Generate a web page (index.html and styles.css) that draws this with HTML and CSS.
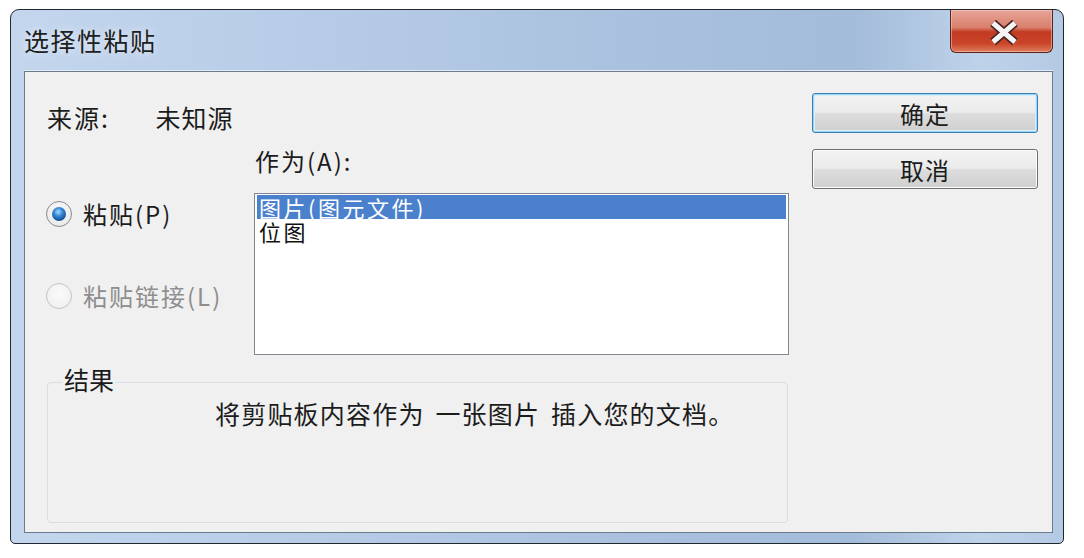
FILE: index.html
```html
<!DOCTYPE html>
<html lang="zh-CN">
<head>
    <meta charset="UTF-8">
    <title>选择性粘贴</title>
    <link rel="stylesheet" href="styles.css">
</head>
<body>
    <div class="window">
        <div class="titlebar">
            <span class="title">选择性粘贴</span>
            <button class="close" title="关闭">
                <svg width="103" height="43" viewBox="0 0 103 43">
                    <path d="M42 13 L64 32 M64 13 L42 32" stroke="#4b2420" stroke-width="8.5" fill="none"/>
                    <path d="M42 13 L64 32 M64 13 L42 32" stroke="#f4f4f4" stroke-width="5" fill="none"/>
                </svg>
            </button>
        </div>
        <div class="client">
            <div class="main">
                <div class="source">
                    <span class="source-label">来源:</span>
                    <span class="source-value">未知源</span>
                </div>
                <div class="as-label">作为(A):</div>
                <div class="choice">
                    <div class="radios">
                        <label class="radio checked"><span class="dot"></span>粘贴(P)</label>
                        <label class="radio disabled"><span class="dot"></span>粘贴链接(L)</label>
                    </div>
                    <ul class="list">
                        <li class="selected">图片(图元文件)</li>
                        <li>位图</li>
                    </ul>
                </div>
                <fieldset class="result">
                    <legend>结果</legend>
                    <p>将剪贴板内容作为 一张图片 插入您的文档。</p>
                </fieldset>
            </div>
            <div class="buttons">
                <button class="btn default">确定</button>
                <button class="btn">取消</button>
            </div>
        </div>
    </div>
</body>
</html>
```

FILE: styles.css
```css
body {
    margin: 0;
    padding: 0;
    background: #fff;
    font-family: "Noto Sans CJK SC", sans-serif;
    color: #1c1c1c;
}
.window {
    box-sizing: border-box;
    width: 1054px;
    height: 535px;
    margin: 9px 0 0 10px;
    padding: 0 10px 10px 13px;
    border: 1px solid #23282e;
    border-radius: 9px 9px 5px 5px;
    background: linear-gradient(90deg, #c3d6ee 0%, #b6cbe6 30%, #a9c1de 60%, #a3bcd9 80%, #bed2ea 92%, #b4cae4 100%);
    display: flex;
    flex-direction: column;
}
.titlebar {
    height: 61px;
    display: flex;
    justify-content: space-between;
    align-items: center;
}
.title {
    font-size: 25px;
    letter-spacing: 1.5px;
    padding-bottom: 2px;
    color: #202020;
    text-shadow: 0 0 8px rgba(255, 255, 255, 0.8);
}
.close {
    align-self: flex-start;
    width: 103px;
    height: 43px;
    padding: 0;
    border: 1px solid #5a241d;
    border-top: none;
    border-radius: 0 0 6px 6px;
    background: linear-gradient(#e6a598 0%, #d97f6c 42%, #c23a22 52%, #cb4529 80%, #de7e5e 100%);
    box-shadow: inset 0 0 0 1px rgba(255, 220, 210, 0.45);
}
.close svg {
    display: block;
}
.client {
    flex: 1;
    display: flex;
    padding: 0 13px 0 22px;
    border: 1px solid #6c7b8c;
    box-shadow: 0 -1px 0 #e4edf7;
    background: #f0f0f0;
}
.main {
    width: 742px;
}
.source {
    margin-top: 30px;
    font-size: 25px;
    line-height: 30px;
}
.source-label {
    display: inline-block;
    width: 103px;
    letter-spacing: 2px;
}
.source-value {
    letter-spacing: 1px;
}
.as-label {
    margin: 14px 0 0 208px;
    font-size: 24px;
    line-height: 30px;
    letter-spacing: 2px;
}
.choice {
    display: flex;
    margin-top: 17px;
}
.radios {
    width: 207px;
    padding-top: 6px;
    display: flex;
    flex-direction: column;
    gap: 52px;
}
.radio {
    display: flex;
    align-items: center;
    gap: 11px;
    font-size: 24px;
    line-height: 30px;
    letter-spacing: 2px;
    margin-left: -1px;
}
.radio .dot {
    box-sizing: border-box;
    width: 26px;
    height: 26px;
    border-radius: 50%;
    border: 1px solid #8a8c8e;
    background: radial-gradient(circle at 50% 40%, #ffffff, #e2e2e2);
    display: flex;
    align-items: center;
    justify-content: center;
}
.radio.checked .dot::after {
    content: "";
    width: 14px;
    height: 14px;
    border-radius: 50%;
    background: radial-gradient(circle at 45% 35%, #a8dcff 0%, #3a8ad6 35%, #0f4b93 75%, #0a2f66 100%);
}
.radio.disabled {
    color: #8e8e8e;
}
.radio.disabled .dot {
    border-color: #c3c3c3;
    background: radial-gradient(circle at 50% 40%, #fbfbfb, #ececec);
}
.list {
    box-sizing: border-box;
    width: 535px;
    height: 162px;
    margin: 0;
    padding: 1px 2px;
    list-style: none;
    border: 1px solid #828790;
    background: #fff;
    font-size: 22px;
    line-height: 24px;
    letter-spacing: 2.5px;
}
.list li {
    padding-left: 2px;
    color: #111;
}
.list li.selected {
    background: #4a80cc;
    color: #fff;
}
.result {
    box-sizing: border-box;
    width: 741px;
    height: 154px;
    margin: 14px 0 0 0;
    padding: 0;
    border: 1px solid #d6dde3;
    border-radius: 4px;
}
.result legend {
    position: relative;
    top: -3px;
    margin-left: 14px;
    padding: 0 2px;
    font-size: 25px;
    line-height: 26px;
}
.result p {
    margin: 3px 0 0 0;
    padding-left: 167px;
    font-size: 25px;
    line-height: 30px;
    letter-spacing: 1.2px;
    word-spacing: 4px;
}
.buttons {
    margin: 21px 0 0 23px;
    display: flex;
    flex-direction: column;
    gap: 16px;
}
.btn {
    width: 226px;
    height: 40px;
    padding: 0;
    font-family: "Noto Sans CJK SC", sans-serif;
    font-size: 24px;
    letter-spacing: 1px;
    color: #1c1c1c;
    border: 1px solid #707070;
    border-radius: 3px;
    background: linear-gradient(#f3f3f3 0%, #ebebeb 48%, #dddddd 52%, #cfcfcf 100%);
    box-shadow: inset 0 0 0 1px #fcfcfc;
}
.btn.default {
    border-color: #3c7fb1;
    box-shadow: inset 0 0 0 1px #9ad6f2, inset 0 0 0 2px #d8eef8;
}
```
